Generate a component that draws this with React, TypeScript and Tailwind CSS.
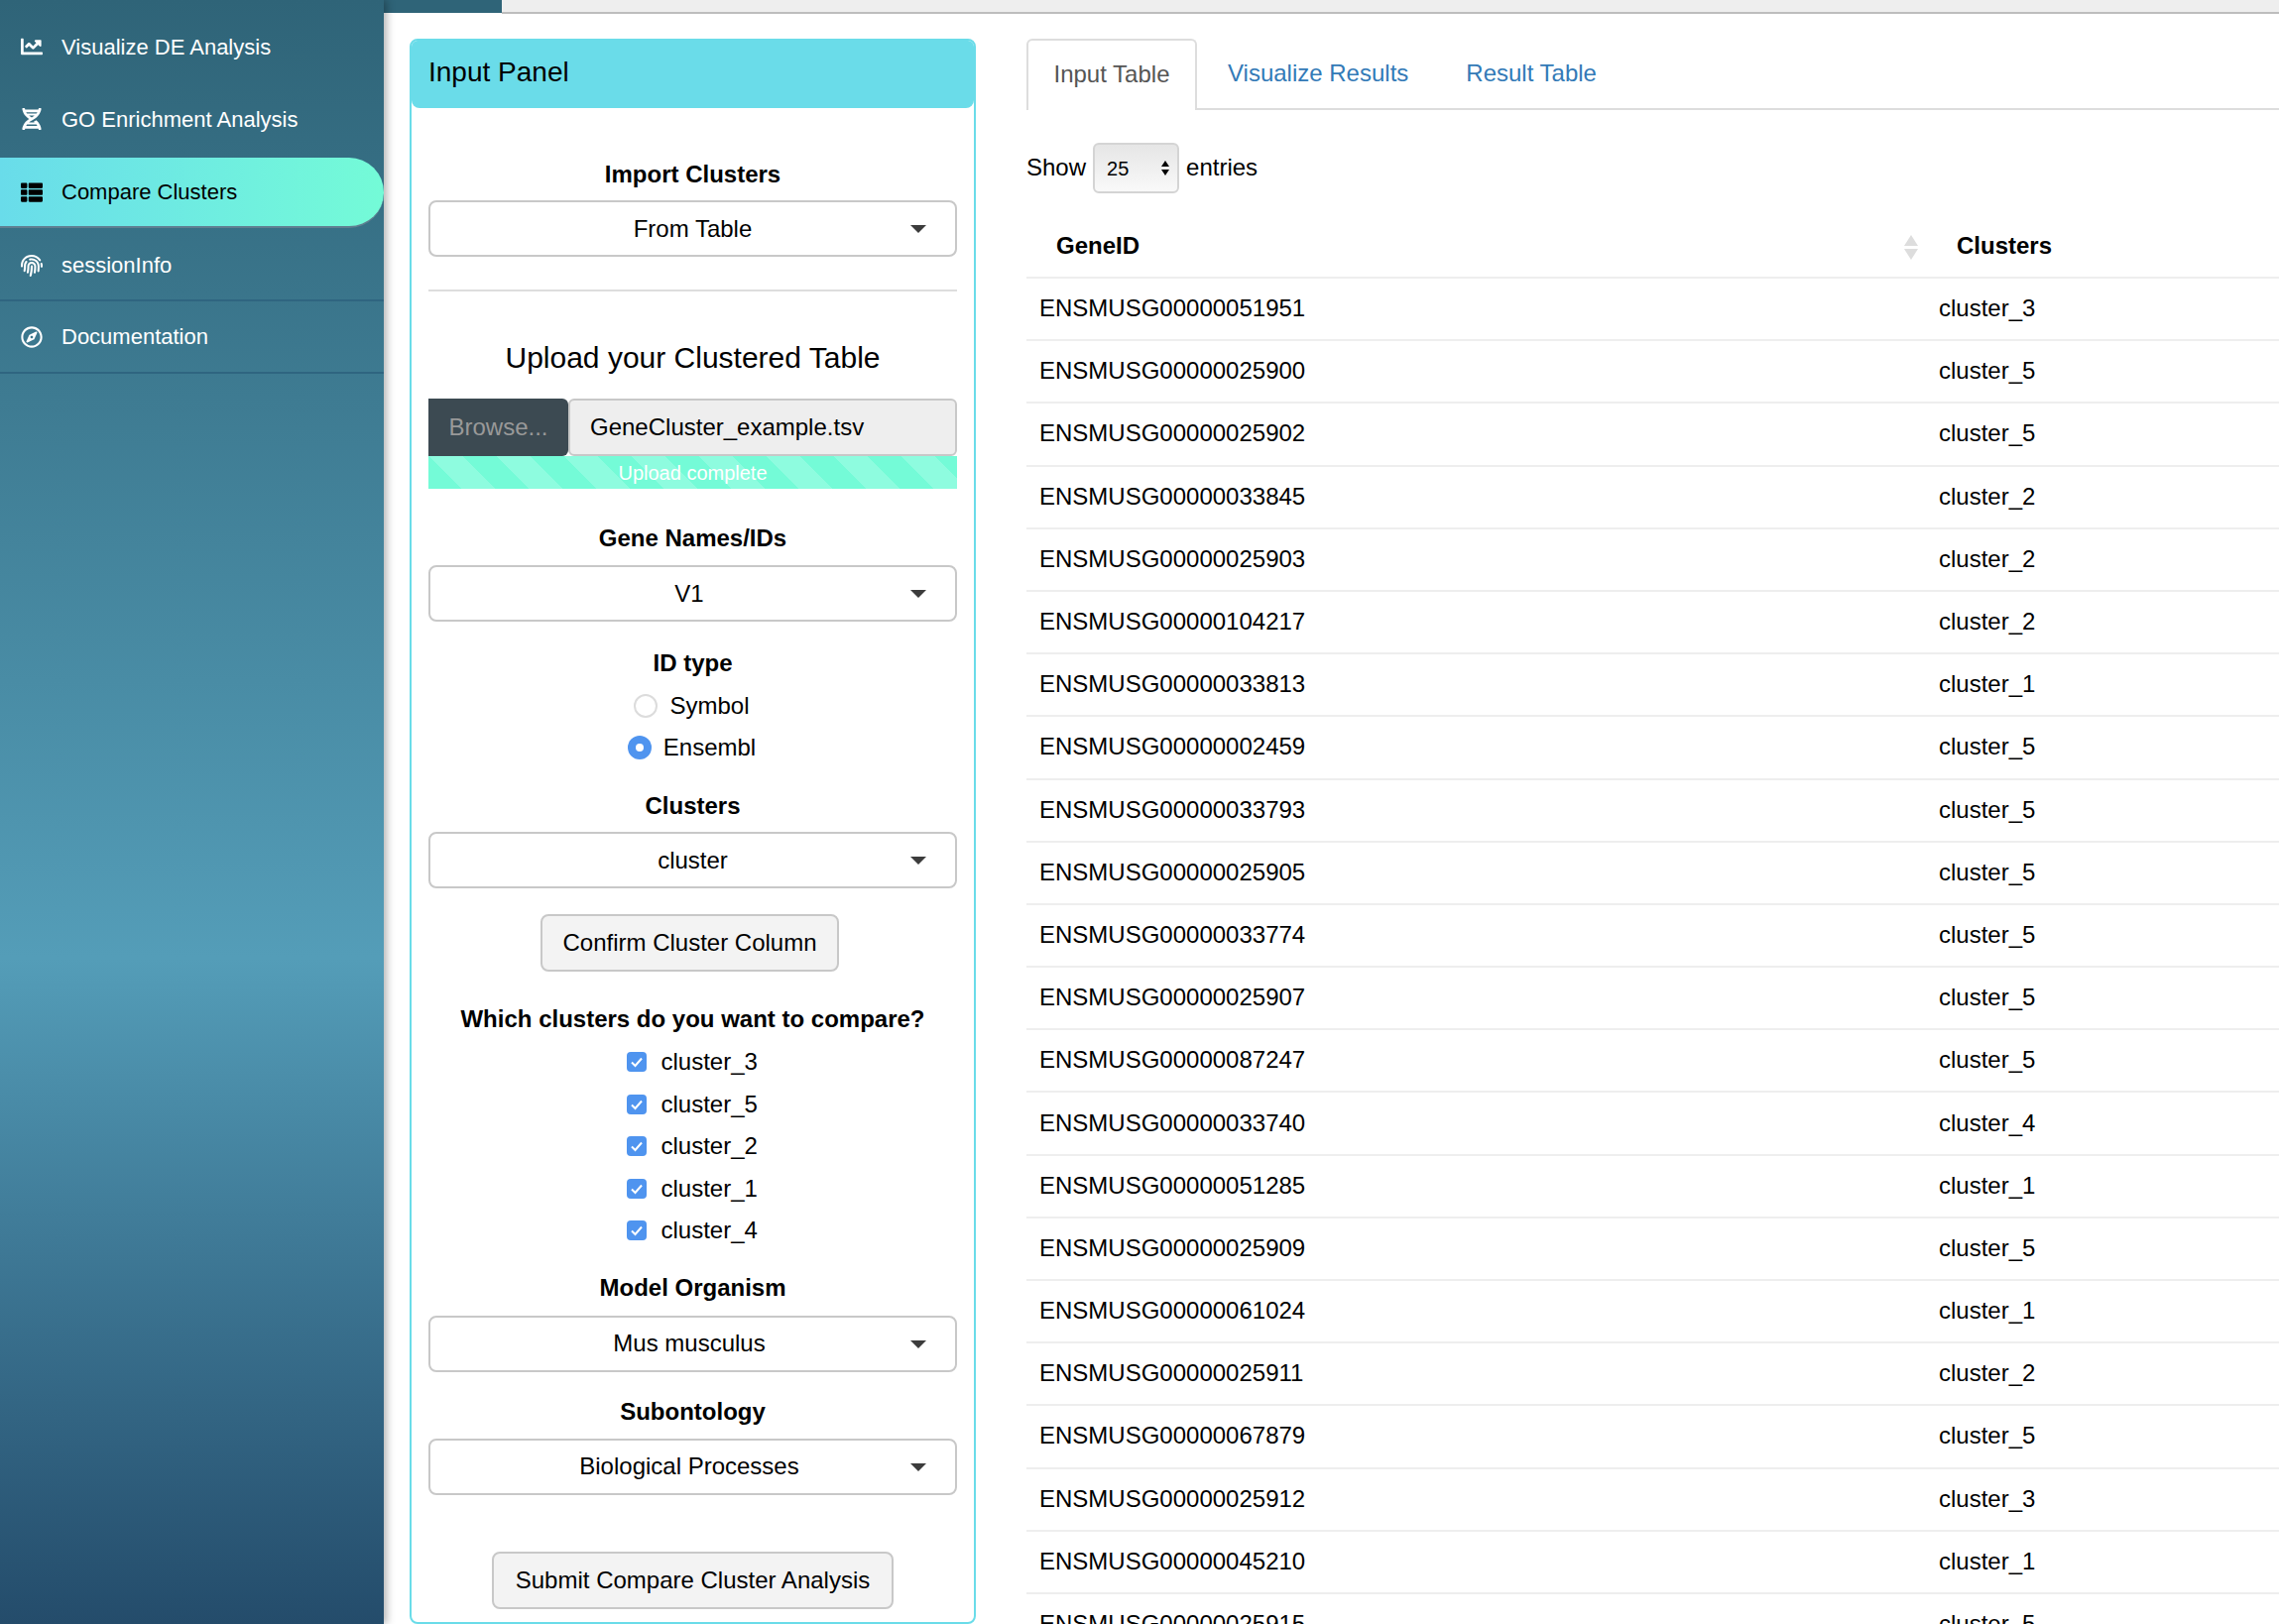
import {
  FaChartLine,
  FaDna,
  FaThList,
  FaFingerprint,
  FaRegCompass,
} from "react-icons/fa";
import type { ReactNode } from "react";

const navItems = [
  { label: "Visualize DE Analysis", icon: <FaChartLine />, h: "h-[87px] pt-[7px]" },
  { label: "GO Enrichment Analysis", icon: <FaDna />, h: "h-[72px] pb-[6px]" },
  { label: "Compare Clusters", icon: <FaThList />, active: true },
  { label: "sessionInfo", icon: <FaFingerprint />, h: "h-[74px] pt-[3px] border-b-2 border-[#2f6580]" },
  { label: "Documentation", icon: <FaRegCompass />, h: "h-[73px] border-b-2 border-[#2f6580]" },
];

const rows = [
  ["ENSMUSG00000051951", "cluster_3"],
  ["ENSMUSG00000025900", "cluster_5"],
  ["ENSMUSG00000025902", "cluster_5"],
  ["ENSMUSG00000033845", "cluster_2"],
  ["ENSMUSG00000025903", "cluster_2"],
  ["ENSMUSG00000104217", "cluster_2"],
  ["ENSMUSG00000033813", "cluster_1"],
  ["ENSMUSG00000002459", "cluster_5"],
  ["ENSMUSG00000033793", "cluster_5"],
  ["ENSMUSG00000025905", "cluster_5"],
  ["ENSMUSG00000033774", "cluster_5"],
  ["ENSMUSG00000025907", "cluster_5"],
  ["ENSMUSG00000087247", "cluster_5"],
  ["ENSMUSG00000033740", "cluster_4"],
  ["ENSMUSG00000051285", "cluster_1"],
  ["ENSMUSG00000025909", "cluster_5"],
  ["ENSMUSG00000061024", "cluster_1"],
  ["ENSMUSG00000025911", "cluster_2"],
  ["ENSMUSG00000067879", "cluster_5"],
  ["ENSMUSG00000025912", "cluster_3"],
  ["ENSMUSG00000045210", "cluster_1"],
  ["ENSMUSG00000025915", "cluster_5"],
];

function Dropdown({ value, className }: { value: string; className?: string }) {
  return (
    <div className={`relative h-[57px] flex items-center justify-center border-2 border-[#c8c8c8] rounded-[8px] bg-white ${className ?? ""}`}>
      <span>{value}</span>
      <span className="absolute right-[29px] top-[23px] w-0 h-0 border-x-[8px] border-x-transparent border-t-[8px] border-t-[#3c3c3c]" />
    </div>
  );
}

function Label({ children, className }: { children: ReactNode; className?: string }) {
  return <div className={`text-center font-bold leading-[30px] ${className ?? ""}`}>{children}</div>;
}

function Check({ label }: { label: string }) {
  return (
    <div className="h-[42.5px] flex items-center justify-center gap-[15px] pr-[1px]">
      <span className="w-[20px] h-[20px] rounded-[4px] bg-[#4f94ef] flex items-center justify-center">
        <svg viewBox="0 0 20 20" className="w-[20px] h-[20px]" fill="none" stroke="white" strokeWidth="2">
          <path d="M5 10.5l3.5 3.5L15 6.5" />
        </svg>
      </span>
      <span className="w-[98px]">{label}</span>
    </div>
  );
}

export default function App() {
  return (
    <div className="w-[2298px] h-[1638px] overflow-hidden flex bg-white text-black text-[24px] [font-family:'Liberation_Sans',Arial,sans-serif]">
      <aside className="w-[387px] shrink-0 h-full bg-gradient-to-b from-[#2f6478] via-[#549db8] via-59% to-[#244c6b] text-white text-[22px] relative z-10 shadow-[3px_0_8px_rgba(0,0,0,0.3)]">
        {navItems.map((item) =>
          item.active ? (
            <div
              key={item.label}
              className="h-[71px] flex items-center rounded-r-[35px] bg-gradient-to-r from-[#69dcea] to-[#74fbd7] text-black border-b-2 border-[#5f7f91]"
            >
              <span className="w-[62px] pl-[21px] text-[22px]">{item.icon}</span>
              {item.label}
            </div>
          ) : (
            <div key={item.label} className={`flex items-center ${item.h}`}>
              <span className="w-[62px] pl-[21px] text-[22px]">{item.icon}</span>
              {item.label}
            </div>
          )
        )}
      </aside>

      <div className="flex-1 min-w-0 flex flex-col">
        <div className="h-[14px] shrink-0 flex">
          <div className="w-[119px] h-[13px] bg-[#2f6478]" />
          <div className="flex-1 bg-[#eeeeee] border-b-2 border-[#bdbdbd]" />
        </div>

        <main className="flex-1 min-h-0 flex pt-[25px] pl-[26px] gap-[51px]">
          <section className="w-[571px] shrink-0 h-[1599px] border-2 border-[#6adce9] rounded-[8px] overflow-hidden">
            <div className="h-[68px] bg-[#6adce9] rounded-b-[8px] flex items-center pl-[17px] pb-[4px] text-[28px]">
              Input Panel
            </div>
            <div className="px-[17px]">
              <Label className="mt-[52px]">Import Clusters</Label>
              <Dropdown value="From Table" className="mt-[11px]" />
              <hr className="mt-[33px] border-t-2 border-[#dddddd]" />
              <div className="mt-[47px] text-center text-[30px] leading-[40px]">Upload your Clustered Table</div>
              <div className="mt-[21px] flex h-[58px]">
                <div className="w-[141px] bg-[#3c4a52] text-[#999999] rounded-tr-[6px] rounded-br-[6px] flex items-center justify-center">Browse...</div>
                <div className="flex-1 bg-[#eeeeee] border-2 border-[#c8c8c8] rounded-[6px] flex items-center pl-[20px]">GeneCluster_example.tsv</div>
              </div>
              <div className="h-[33px] bg-[repeating-linear-gradient(45deg,#74fbd7_0,#74fbd7_24px,#8efcdf_24px,#8efcdf_48px)] text-white text-[20px] flex items-center justify-center">Upload complete</div>
              <Label className="mt-[35px]">Gene Names/IDs</Label>
              <Dropdown value="V1" className="mt-[12px] pr-[7px]" />
              <Label className="mt-[27px]">ID type</Label>
              <div className="mt-[7px] h-[42px] flex items-center justify-center gap-[12px] pr-[2px]">
                <span className="w-[24px] h-[24px] rounded-full border-2 border-[#dcdcdc] bg-white" />
                Symbol
              </div>
              <div className="h-[42px] flex items-center justify-center gap-[12px] pr-[2px]">
                <span className="w-[24px] h-[24px] rounded-full bg-[#4f94ef] flex items-center justify-center">
                  <span className="w-[8px] h-[8px] rounded-full bg-white" />
                </span>
                Ensembl
              </div>
              <Label className="mt-[23px]">Clusters</Label>
              <Dropdown value="cluster" className="mt-[11px]" />
              <div className="mt-[26px] flex justify-center pr-[6px]">
                <div className="w-[301px] h-[58px] bg-[#f3f3f3] border-2 border-[#c8c8c8] rounded-[8px] flex items-center justify-center">Confirm Cluster Column</div>
              </div>
              <Label className="mt-[33px]">Which clusters do you want to compare?</Label>
              <div className="mt-[7px]">
                {["cluster_3", "cluster_5", "cluster_2", "cluster_1", "cluster_4"].map((c) => (
                  <Check key={c} label={c} />
                ))}
              </div>
              <Label className="mt-[21px]">Model Organism</Label>
              <Dropdown value="Mus musculus" className="mt-[13px] pr-[7px]" />
              <Label className="mt-[25px]">Subontology</Label>
              <Dropdown value="Biological Processes" className="mt-[12px] pr-[7px]" />
              <div className="mt-[57px] flex justify-center">
                <div className="w-[405px] h-[58px] bg-[#f3f3f3] border-2 border-[#c8c8c8] rounded-[8px] flex items-center justify-center">Submit Compare Cluster Analysis</div>
              </div>
            </div>
          </section>

          <section className="flex-1 min-w-0">
            <div className="h-[72px] flex border-b-2 border-[#dddddd]">
              <div className="w-[172px] h-[72px] bg-white border-2 border-b-0 border-[#dddddd] rounded-t-[6px] flex items-center justify-center pb-[3px] text-[#555555]">Input Table</div>
              <div className="ml-[31px] flex items-center text-[#337ab7]">Visualize Results</div>
              <div className="ml-[58px] flex items-center text-[#337ab7]">Result Table</div>
            </div>
            <div className="mt-[33px] h-[51px] flex items-center">
              <span className="pb-[2px]">Show</span>
              <div className="mx-[7px] w-[87px] h-[51px] border-2 border-[#d4d4d4] rounded-[6px] bg-gradient-to-b from-[#e6e6e6] to-[#f9f9f9] flex items-center justify-between pl-[12px] pr-[8px] text-[20px]">
                25
                <span className="flex flex-col gap-[3px]">
                  <span className="w-0 h-0 border-x-[4px] border-x-transparent border-b-[6px] border-b-black" />
                  <span className="w-0 h-0 border-x-[4px] border-x-transparent border-t-[6px] border-t-black" />
                </span>
              </div>
              <span className="pb-[2px]">entries</span>
            </div>
            <table className="mt-[25px] w-full border-collapse">
              <thead>
                <tr className="h-[60px] border-b-2 border-[#eeeeee] font-bold">
                  <th className="w-[907px] pl-[30px] pb-[3px] text-left relative">
                    GeneID
                    <span className="absolute right-[8px] top-[17px] flex flex-col gap-[3px]">
                      <span className="w-0 h-0 border-x-[7px] border-x-transparent border-b-[11px] border-b-[#dddddd]" />
                      <span className="w-0 h-0 border-x-[7px] border-x-transparent border-t-[11px] border-t-[#dddddd]" />
                    </span>
                  </th>
                  <th className="pl-[31px] pb-[3px] text-left">Clusters</th>
                </tr>
              </thead>
              <tbody>
                {rows.map((r) => (
                  <tr key={r[0]} className="h-[63.2px] border-b-2 border-[#eeeeee]">
                    <td className="pl-[13px] pb-[1px]">{r[0]}</td>
                    <td className="pl-[13px] pb-[1px]">{r[1]}</td>
                  </tr>
                ))}
              </tbody>
            </table>
          </section>
        </main>
      </div>
    </div>
  );
}
